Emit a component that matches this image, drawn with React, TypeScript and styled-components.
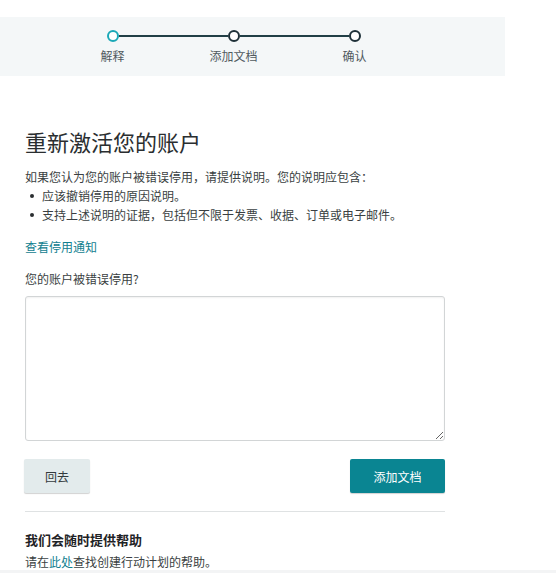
import React from 'react'
import styled, { createGlobalStyle } from 'styled-components';

const GlobalStyle = createGlobalStyle`
    body {
        margin: 0;
        background: #ffffff;
        font-family: "Noto Sans CJK SC", "Noto Sans", Arial, sans-serif;
        color: #333333;
    }
`;

const steps = ['解释', '添加文档', '确认']

const App: React.FC = () => {
    return (
        <Page>
            <GlobalStyle/>
            <Stepper>
                <Track>
                    {steps.map((s, i) => (
                        <React.Fragment key={s}>
                            <Dot active={i === 0}/>
                            {i < steps.length - 1 && <Line/>}
                        </React.Fragment>
                    ))}
                </Track>
                <Labels>
                    {steps.map(s => <StepLabel key={s}>{s}</StepLabel>)}
                </Labels>
            </Stepper>

            <Content>
                <Title>重新激活您的账户</Title>
                <Text>如果您认为您的账户被错误停用，请提供说明。您的说明应包含：</Text>
                <List>
                    <Item>应该撤销停用的原因说明。</Item>
                    <Item>支持上述说明的证据，包括但不限于发票、收据、订单或电子邮件。</Item>
                </List>
                <LinkText href="#">查看停用通知</LinkText>
                <FieldLabel>您的账户被错误停用?</FieldLabel>
                <TextArea/>
                <Buttons>
                    <BackButton>回去</BackButton>
                    <PrimaryButton>添加文档</PrimaryButton>
                </Buttons>
                <Divider/>
                <HelpTitle>我们会随时提供帮助</HelpTitle>
                <HelpText>请在<InlineLink href="#">此处</InlineLink>查找创建行动计划的帮助。</HelpText>
            </Content>
            <Footer/>
        </Page>
    )
}

export default App

const Page = styled.div`
    display: flex;
    flex-direction: column;
    padding-top: 17px;
`;

const Stepper = styled.div`
    width: 505px;
    height: 59px;
    box-sizing: border-box;
    background: #f4f7f8;
    padding-top: 13px;
`;

const Track = styled.div`
    display: flex;
    align-items: center;
    padding-left: 107px;
`;

const Dot = styled.span<{ active?: boolean }>`
    display: block;
    width: 12px;
    height: 12px;
    box-sizing: border-box;
    border-radius: 50%;
    background: #ffffff;
    border: 2px solid ${p => p.active ? '#1ba8b7' : '#1e3038'};
`;

const Line = styled.span`
    display: block;
    width: 109px;
    height: 2px;
    background: #213f46;
`;

const Labels = styled.div`
    display: grid;
    grid-template-columns: repeat(3, 121px);
    padding-left: 52px;
    margin-top: 6px;
`;

const StepLabel = styled.span`
    text-align: center;
    font-size: 12px;
    line-height: 16px;
    color: #505a5f;
`;

const Content = styled.div`
    display: flex;
    flex-direction: column;
    align-items: flex-start;
    width: 420px;
    padding-left: 25px;
`;

const Title = styled.h1`
    margin: 50px 0 0;
    font-size: 22px;
    line-height: 30px;
    font-weight: 400;
    color: #2a2e30;
`;

const Text = styled.p`
    margin: 11px 0 0;
    font-size: 12px;
    line-height: 19px;
    color: #3a3f42;
`;

const List = styled.ul`
    margin: 0;
    padding: 0;
    list-style: none;
`;

const Item = styled.li`
    position: relative;
    padding-left: 17px;
    font-size: 12px;
    line-height: 19px;
    color: #3a3f42;
    &::before {
        content: '';
        position: absolute;
        left: 5px;
        top: 8px;
        width: 4px;
        height: 4px;
        border-radius: 50%;
        background: #2a2e30;
    }
`;

const LinkText = styled.a`
    margin-top: 13px;
    font-size: 12px;
    line-height: 19px;
    color: #12808f;
    text-decoration: none;
`;

const FieldLabel = styled.label`
    margin-top: 13px;
    font-size: 12px;
    line-height: 19px;
    color: #3a3f42;
`;

const TextArea = styled.textarea`
    margin-top: 8px;
    width: 420px;
    height: 145px;
    box-sizing: border-box;
    border: 1px solid #d2d5d6;
    border-radius: 3px;
    box-shadow: inset 0 1px 2px rgba(0, 0, 0, 0.06);
    resize: vertical;
    font-family: inherit;
`;

const Buttons = styled.div`
    display: flex;
    justify-content: space-between;
    width: 420px;
    margin-top: 18px;
`;

const BaseButton = styled.button`
    height: 34px;
    border: none;
    border-radius: 2px;
    font-family: inherit;
    font-size: 12px;
    box-shadow: 0 1px 1px rgba(0, 0, 0, 0.18);
    cursor: pointer;
`;

const BackButton = styled(BaseButton)`
    width: 66px;
    margin-left: -1px;
    background: #e3ebec;
    color: #333a3d;
`;

const PrimaryButton = styled(BaseButton)`
    width: 95px;
    background: #0a8592;
    color: #ffffff;
`;

const Divider = styled.hr`
    width: 420px;
    margin: 18px 0 0;
    border: none;
    border-top: 1px solid #dfe2e3;
`;

const HelpTitle = styled.h3`
    margin: 19px 0 0;
    font-size: 13px;
    line-height: 18px;
    font-weight: 700;
    color: #1f2326;
`;

const HelpText = styled.p`
    margin: 5px 0 0;
    font-size: 12px;
    line-height: 16px;
    color: #3a3f42;
`;

const InlineLink = styled.a`
    color: #12808f;
    text-decoration: none;
`;

const Footer = styled.div`
    height: 60px;
    background: #f3f4f5;
`;
